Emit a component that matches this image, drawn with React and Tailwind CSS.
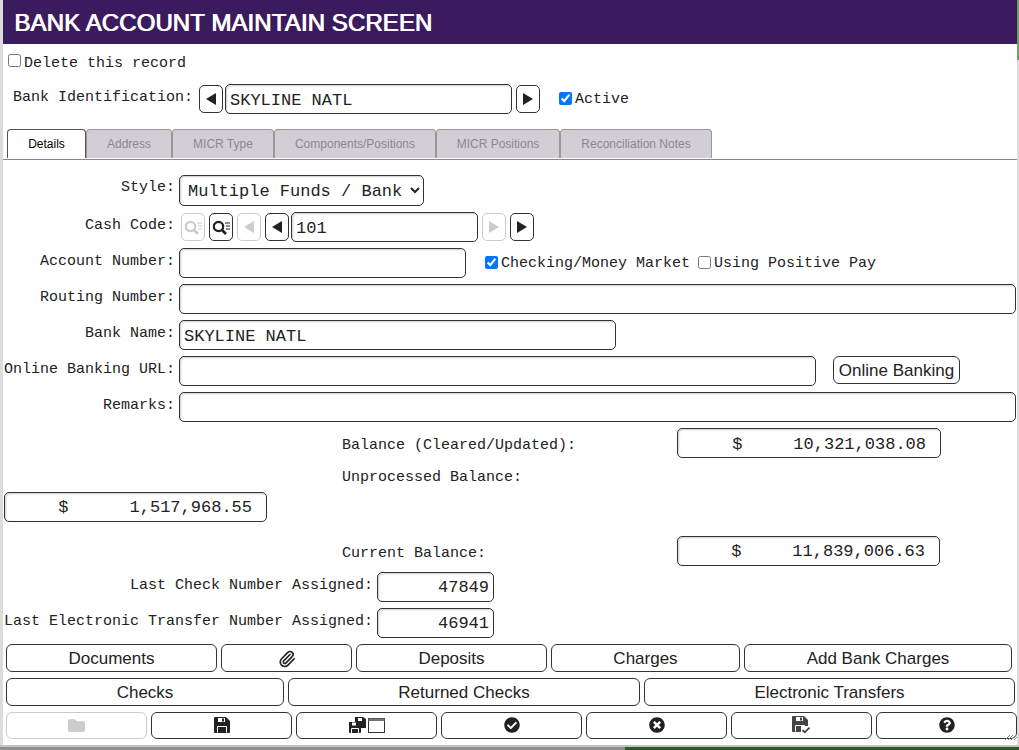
import { FaFolder, FaCheckCircle, FaTimesCircle, FaQuestionCircle } from 'react-icons/fa';
import { Paperclip } from 'lucide-react';

const mono = "font-['Liberation_Mono',monospace] text-[15px] text-[#222] whitespace-pre";
const field = "h-[30px] border border-[#333] rounded-[5px] bg-white px-1 pt-[2px] font-['Liberation_Mono',monospace] text-[17px] text-[#222] shadow-[inset_1px_1px_2px_#ccc] outline-none";
const pill = "h-[28px] border border-[#333] rounded-[6px] bg-white text-[#222] text-[17px] font-['Liberation_Sans',sans-serif] flex items-center justify-center shrink-0";
const textPill = `${pill} pt-[2px]`;
const amount = `${field} text-right pr-[14px]`;

const tabs = [
  ['Address', 'w-[86px]'],
  ['MICR Type', 'w-[102px]'],
  ['Components/Positions', 'w-[162px]'],
  ['MICR Positions', 'w-[124px]'],
  ['Reconciliation Notes', 'w-[152px]'],
];

const Arrow = ({ dir, off }) => (
  <div className={`w-[24px] h-[28px] shrink-0 rounded-[5px] border flex items-center justify-center bg-white ${off ? 'border-[#ccc]' : 'border-[#333]'}`}>
    <svg width="10" height="12" viewBox="0 0 10 12" fill={off ? '#ccc' : '#222'}>
      {dir === 'left' ? <polygon points="10,0 10,12 0,6" /> : <polygon points="0,0 0,12 10,6" />}
    </svg>
  </div>
);

const SearchList = ({ off }) => {
  const c = off ? '#ccc' : '#222';
  return (
    <div className={`w-[24px] h-[28px] shrink-0 rounded-[5px] border flex items-center justify-center bg-white ${off ? 'border-[#ccc]' : 'border-[#333]'}`}>
      <svg width="19" height="15" viewBox="0 0 19 15" fill="none" stroke={c}>
        <circle cx="6.5" cy="6.5" r="4.7" strokeWidth="2.2" />
        <path d="M10 10l4 4" strokeWidth="2.6" />
        <path d="M13 3h5M14 6h4M14 9h4" strokeWidth="1.2" />
      </svg>
    </div>
  );
};

const Label = ({ children, className = 'mb-[2px]' }) => (
  <div className={`${mono} w-[172px] text-right mr-[4px] shrink-0 ${className}`}>{children}</div>
);

const Row = ({ className, label, labelClass, children }) => (
  <div className={`flex items-center h-[30px] ${className}`}>
    <Label className={labelClass}>{label}</Label>
    {children}
  </div>
);

// floppy shapes used on the bottom toolbar
const floppyBody = 'M1 0h11l4 4v11a1 1 0 0 1-1 1H1a1 1 0 0 1-1-1V1a1 1 0 0 1 1-1z';

const Floppy = () => (
  <svg width="16" height="16" viewBox="0 0 16 16">
    <path d={floppyBody} fill="#222" />
    <rect x="4" y="1" width="7" height="4" fill="#fff" />
    <rect x="8" y="1.5" width="2" height="3" fill="#222" />
    <path d="M3.5 15.5V9.5h9v6" fill="none" stroke="#fff" />
  </svg>
);

const SaveCheck = () => (
  <svg width="20" height="18" viewBox="0 0 20 18">
    <path d={floppyBody} fill="#444" />
    <rect x="4" y="1" width="7" height="4" fill="#fff" />
    <rect x="8" y="1.5" width="2" height="3" fill="#444" />
    <path d="M3.5 15.5V9.5h9v6" fill="none" stroke="#fff" />
    <path d="M9 10h11v8H9z" fill="#fff" />
    <path d="M10.5 14l2.3 2.3 4.7-4.7" fill="none" stroke="#444" strokeWidth="1.8" />
  </svg>
);

const SaveWindow = () => (
  <svg width="36" height="17" viewBox="0 0 36 17">
    <path d="M6 0h8l3 2v9H6z" fill="#222" />
    <rect x="9" y="1" width="4" height="3" fill="#fff" />
    <path d="M0 5h9l3 2v8a1 1 0 0 1-1 1H1a1 1 0 0 1-1-1z" fill="#222" />
    <rect x="3" y="5.5" width="4" height="3" fill="#fff" />
    <path d="M2.5 16v-4.5h7V16" fill="none" stroke="#fff" />
    <rect x="19.5" y="1.5" width="16" height="14" fill="none" stroke="#333" />
    <rect x="19.5" y="1.5" width="16" height="2.5" fill="#777" />
  </svg>
);

const App = () => {
  return (
    <div className="w-[1019px] h-[750px] overflow-hidden flex flex-col bg-[#8f8f8f]">
      <div className="flex h-[745px] shrink-0">
        <div className="w-[3px] bg-[#dcdcdc] shrink-0" />
        <div className="w-[1014px] shrink-0 bg-white flex flex-col relative">
          <div className="h-[44px] bg-[#3a1b5e] flex items-center pl-[11px] pt-[1px] shrink-0">
            <span className="font-['Liberation_Sans',sans-serif] text-[24px] tracking-[0.1px] text-white [text-shadow:1px_0_0_#fff]">BANK ACCOUNT MAINTAIN SCREEN</span>
          </div>

          <label className={`${mono} flex items-center h-[20px] mt-[10px] ml-[5px]`}>
            <input type="checkbox" className="mr-[3px] mb-[8px]" />Delete this record
          </label>

          <div className="flex items-center h-[30px] mt-[10px]">
            <div className={`${mono} ml-[10px] w-[186px] mb-[2px]`}>Bank Identification:</div>
            <Arrow dir="left" />
            <input readOnly value="SKYLINE NATL" className={`${field} w-[287px] ml-[2px]`} />
            <div className="ml-[4px]"><Arrow dir="right" /></div>
            <input type="checkbox" defaultChecked className="ml-[19px] mb-[2px]" />
            <span className={`${mono} ml-[3px] mt-[2px]`}>Active</span>
          </div>

          <div className="flex items-end h-[31px] mt-[15px] pl-[4px] pb-[1px] border-b border-[#888] shrink-0">
            <div className="w-[79px] h-[29px] bg-white border border-[#555] border-b-0 rounded-t-[4px] text-[12px] text-black font-['Liberation_Sans',sans-serif] flex items-center justify-center">Details</div>
            {tabs.map(([name, w]) => (
              <div key={name} className={`${w} h-[29px] bg-[#d3ced6] border border-b-0 border-[#999] rounded-t-[4px] text-[12px] text-[#8e878f] font-['Liberation_Sans',sans-serif] flex items-center justify-center`}>{name}</div>
            ))}
          </div>

          <Row className="mt-[14px] !h-[32px]" labelClass="mb-[4px]" label="Style:">
            <select className={`${field} !h-[31px] w-[245px]`}>
              <option>Multiple Funds / Bank</option>
            </select>
          </Row>

          <Row className="mt-[6px]" label="Cash Code:">
            <div className="flex items-center gap-[4px] ml-[2px]">
              <SearchList off />
              <SearchList />
              <Arrow dir="left" off />
              <Arrow dir="left" />
            </div>
            <input readOnly value="101" className={`${field} w-[187px] ml-[2px]`} />
            <div className="flex items-center gap-[4px] ml-[4px]">
              <Arrow dir="right" off />
              <Arrow dir="right" />
            </div>
          </Row>

          <Row className="mt-[6px]" label="Account Number:">
            <input readOnly className={`${field} w-[287px]`} />
            <input type="checkbox" defaultChecked className="ml-[19px] mb-[2px]" />
            <span className={`${mono} ml-[3px] mt-[2px]`}>Checking/Money Market</span>
            <input type="checkbox" className="ml-[8px] mb-[2px]" />
            <span className={`${mono} ml-[3px] mt-[2px]`}>Using Positive Pay</span>
          </Row>

          <Row className="mt-[6px]" label="Routing Number:">
            <input readOnly className={`${field} w-[837px]`} />
          </Row>

          <Row className="mt-[6px]" label="Bank Name:">
            <input readOnly value="SKYLINE NATL" className={`${field} w-[437px]`} />
          </Row>

          <Row className="mt-[6px]" label="Online Banking URL:">
            <input readOnly className={`${field} w-[637px]`} />
            <div className={`${textPill} w-[127px] ml-[17px] mb-[2px]`}>Online Banking</div>
          </Row>

          <Row className="mt-[6px]" label="Remarks:">
            <input readOnly className={`${field} w-[837px]`} />
          </Row>

          <div className="flex items-center h-[30px] mt-[6px]">
            <div className={`${mono} ml-[339px] w-[335px] mt-[7px]`}>Balance (Cleared/Updated):</div>
            <input readOnly value="$     10,321,038.08" className={`${amount} w-[264px]`} />
          </div>

          <div className={`${mono} ml-[339px] mt-[9px]`}>Unprocessed Balance:</div>

          <input readOnly value="$      1,517,968.55" className={`${amount} w-[263px] ml-[1px] mt-[2px]`} />

          <div className="flex items-center h-[30px] mt-[14px]">
            <div className={`${mono} ml-[339px] w-[335px] mt-[8px]`}>Current Balance:</div>
            <input readOnly value="$     11,839,006.63" className={`${amount} w-[263px]`} />
          </div>

          <div className="flex items-center justify-end w-[491px] h-[30px] mt-[6px]">
            <div className={`${mono} mr-[4px]`}>Last Check Number Assigned:</div>
            <input readOnly value="47849" className={`${field} w-[117px] text-right`} />
          </div>
          <div className="flex items-center justify-end w-[491px] h-[30px] mt-[6px]">
            <div className={`${mono} mr-[4px]`}>Last Electronic Transfer Number Assigned:</div>
            <input readOnly value="46941" className={`${field} w-[117px] text-right`} />
          </div>

          <div className="flex gap-[4px] ml-[3px] mt-[6px]">
            <div className={`${textPill} w-[211px]`}>Documents</div>
            <div className={`${textPill} w-[131px]`}><Paperclip size={18} strokeWidth={2.2} /></div>
            <div className={`${textPill} w-[191px]`}>Deposits</div>
            <div className={`${textPill} w-[189px]`}>Charges</div>
            <div className={`${textPill} w-[268px]`}>Add Bank Charges</div>
          </div>

          <div className="flex gap-[4px] ml-[3px] mt-[6px]">
            <div className={`${textPill} w-[278px]`}>Checks</div>
            <div className={`${textPill} w-[352px]`}>Returned Checks</div>
            <div className={`${textPill} w-[371px]`}>Electronic Transfers</div>
          </div>

          <div className="flex gap-[4px] ml-[3px] mt-[6px]">
            <div className={`${pill} w-[141px] !h-[27px] !border-[#ccc]`}><FaFolder size={17} color="#ccc" /></div>
            <div className={`${pill} w-[141px] !h-[27px]`}><Floppy /></div>
            <div className={`${pill} w-[141px] !h-[27px]`}><SaveWindow /></div>
            <div className={`${pill} w-[141px] !h-[27px]`}><FaCheckCircle size={16} /></div>
            <div className={`${pill} w-[141px] !h-[27px]`}><FaTimesCircle size={16} /></div>
            <div className={`${pill} w-[141px] !h-[27px]`}><SaveCheck /></div>
            <div className={`${pill} w-[141px] !h-[27px]`}><FaQuestionCircle size={16} /></div>
          </div>

          {/* resize grip */}
          <svg className="absolute right-0 bottom-[5px]" width="12" height="5" viewBox="0 0 12 5" stroke="#888">
            <path d="M0 5l5-5M3 5l5-5M6 5l5-5M9 5l3-3" />
          </svg>
        </div>
        <div className="w-[2px] shrink-0 flex flex-col bg-[#dcdcdc]">
          <div className="h-[60px] bg-[#6f9f68]" />
        </div>
      </div>
      <div className="h-[5px] shrink-0 flex flex-col">
        <div className="h-[2px] bg-[#c4c4c4]" />
        <div className="flex flex-1">
          <div className="w-[625px] bg-[#8f8f8f]" />
          <div className="flex-1 bg-[#2e5a2c]" />
        </div>
      </div>
    </div>
  );
};

export default App;
